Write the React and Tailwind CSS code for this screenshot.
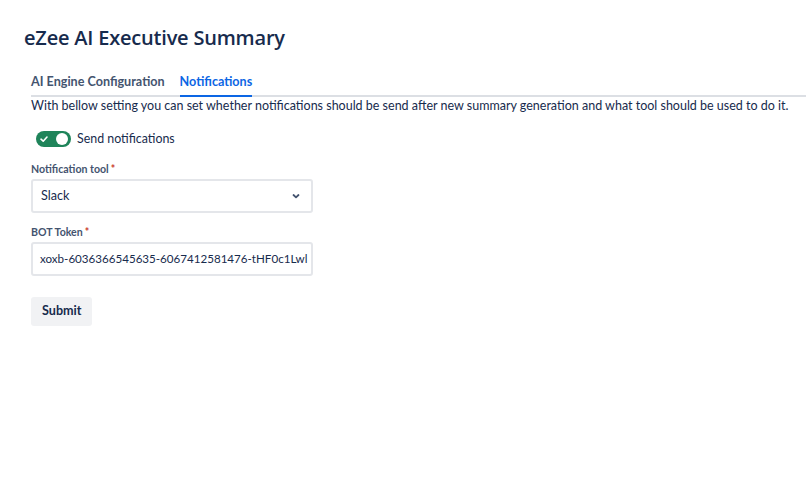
import React from "react";

export default function App() {
  const title = { fontFamily: '"Open Sans", "Noto Sans", sans-serif' };
  const font = { fontFamily: 'Lato, "Open Sans", sans-serif' };
  return (
    <div className="w-[806px] h-[480px] bg-white text-[#172B4D] overflow-hidden" style={font}>
      <div className="pl-[24px] pt-[24px]">
        <h1 className="text-[20px] leading-[28px] font-semibold text-[#172B4D] tracking-[-0.2px]" style={title}>eZee AI Executive Summary</h1>
      </div>
      <div className="pl-[31px] mt-[20px]">
        <div className="flex border-b-2 border-[#DCDFE4] gap-[15px]">
          <div className="text-[12.6px] font-bold text-[#44546F] pb-[3px] leading-[20px]">AI Engine Configuration</div>
          <div className="text-[12.6px] font-bold text-[#0C66E4] pb-[3px] leading-[20px] relative">
            Notifications
            <div className="absolute left-0 right-0 -bottom-[2px] h-[2px] bg-[#0C66E4]"></div>
          </div>
        </div>
        <p className="text-[12.5px] leading-[17px] text-[#172B4D] mt-0 whitespace-nowrap">
          With bellow setting you can set whether notifications should be send after new summary generation and what tool should be used to do it.
        </p>
        <div className="flex items-center mt-[16px] ml-[5px] gap-[6px]">
          <div className="w-[35px] h-[16px] rounded-full bg-[#1F845A] flex items-center justify-between px-[3px]">
            <svg width="10" height="10" viewBox="0 0 10 10">
              <path d="M2 5.2 L4.2 7.2 L8 3" stroke="white" strokeWidth="1.6" fill="none" strokeLinecap="round" strokeLinejoin="round" />
            </svg>
            <div className="w-[12px] h-[12px] rounded-full bg-white"></div>
          </div>
          <span className="text-[12.4px] text-[#172B4D] leading-[18px]">Send notifications</span>
        </div>
        <div className="mt-[13px] text-[10.6px] font-bold text-[#44546F] leading-[16px]">
          Notification tool<span className="text-[#C9372C] ml-[2px]">*</span>
        </div>
        <div className="mt-[2px] w-[282px] h-[34px] border-2 border-[#E4E6EA] rounded-[3px] flex items-center justify-between pl-[8px] pr-[10px]">
          <span className="text-[12.6px] text-[#172B4D]">Slack</span>
          <svg width="10" height="10" viewBox="0 0 10 10">
            <path d="M2.5 4 L5 6.3 L7.5 4" stroke="#44546F" strokeWidth="1.8" fill="none" strokeLinecap="round" strokeLinejoin="round" />
          </svg>
        </div>
        <div className="mt-[11px] text-[10.6px] font-bold text-[#44546F] leading-[16px]">
          BOT Token<span className="text-[#C9372C] ml-[2px]">*</span>
        </div>
        <div className="mt-[2px] w-[282px] h-[34px] border-2 border-[#E4E6EA] rounded-[3px] flex items-center pl-[7px] overflow-hidden">
          <span className="text-[11.6px] text-[#172B4D] whitespace-nowrap">xoxb-6036366545635-6067412581476-tHF0c1Lwl</span>
        </div>
        <button className="mt-[21px] h-[29px] px-[11px] rounded-[3px] bg-[#F1F2F4] text-[12.6px] font-bold text-[#172B4D]">Submit</button>
      </div>
    </div>
  );
}
